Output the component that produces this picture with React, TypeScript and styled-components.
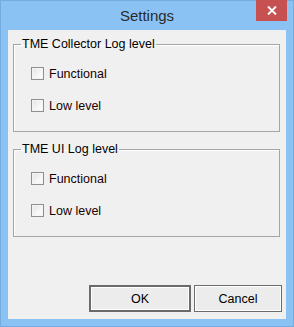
import React from 'react';
import styled, {createGlobalStyle} from "styled-components";

const GlobalStyle = createGlobalStyle`
  html, body {
    margin: 0;
    padding: 0;
    background: #ffffff;
  }
  * {
    box-sizing: border-box;
  }
`

const font = `"Liberation Sans", Arial, sans-serif`

type Group = {
    title: string;
    options: string[];
}

const groups: Group[] = [
    {title: "TME Collector Log level", options: ["Functional", "Low level"]},
    {title: "TME UI Log level", options: ["Functional", "Low level"]},
]

export default function App() {
    return (
        <>
            <GlobalStyle/>
            <Window>
                <TitleBar>
                    <Title>Settings</Title>
                    <CloseButton aria-label="Close">
                        <svg width="10" height="9" viewBox="0 0 10 9">
                            <path d="M1 0.5 L9 8.5 M9 0.5 L1 8.5" stroke="#fff" strokeWidth="2"/>
                        </svg>
                    </CloseButton>
                </TitleBar>
                <Client>
                    {groups.map(group => (
                        <GroupBox key={group.title}>
                            <Legend>{group.title}</Legend>
                            {group.options.map(option => (
                                <Option key={option}>
                                    <CheckBox/>
                                    <span>{option}</span>
                                </Option>
                            ))}
                        </GroupBox>
                    ))}
                    <Buttons>
                        <DialogButton $primary $width={102}>OK</DialogButton>
                        <DialogButton $width={88}>Cancel</DialogButton>
                    </Buttons>
                </Client>
            </Window>
        </>
    );
}

const Window = styled.div`
  width: 294px;
  height: 327px;
  background: #89c2f3;
  border: 1px solid #74ace2;
  display: flex;
  flex-direction: column;
  font-family: ${font};
`

const TitleBar = styled.div`
  height: 30px;
  display: grid;
  grid-template-columns: 1fr auto 1fr;
  margin-top: -1px;
`

const Title = styled.div`
  grid-column: 2;
  font-size: 15px;
  color: #2b2b2b;
  padding-top: 7px;
`

const CloseButton = styled.div`
  grid-column: 3;
  justify-self: end;
  align-self: start;
  width: 31px;
  height: 21px;
  margin-right: 6px;
  background: #c75050;
  display: flex;
  align-items: center;
  justify-content: center;
`

const Client = styled.div`
  flex: 1;
  margin: 0 7px 7px 7px;
  background: #f0f0f0;
  padding: 7px 6px 7px 5px;
  display: flex;
  flex-direction: column;
`

const GroupBox = styled.fieldset`
  margin: 0 0 10px 0;
  padding: 0;
  height: 95px;
  border: 1px solid #a5a5a5;
  box-shadow: inset 1px 1px 0 #ffffff;
  display: flex;
  flex-direction: column;
  gap: 19px;
`

const Legend = styled.legend`
  margin-left: 7px;
  padding: 0 1px;
  font-size: 12.5px;
  line-height: 14px;
  color: #000;
  margin-bottom: 16px;
`

const Option = styled.label`
  display: flex;
  align-items: center;
  gap: 5px;
  height: 13px;
  margin-left: 17px;
  font-size: 12.5px;
  color: #1a0000;
`

const CheckBox = styled.span`
  width: 13px;
  height: 13px;
  border: 1px solid #8f8f8f;
  background: linear-gradient(135deg, #e4e4e4 0%, #f6f6f6 60%, #ffffff 100%);
  box-shadow: inset 0 0 0 1px #f4f4f4;
  flex-shrink: 0;
`

const Buttons = styled.div`
  margin-top: auto;
  display: flex;
  justify-content: flex-end;
  gap: 3px;
  margin-right: -2px;
`

const DialogButton = styled.div<{ $primary?: boolean; $width: number }>`
  width: ${p => p.$width}px;
  height: 27px;
  border: ${p => p.$primary ? "2px" : "1px"} solid #6b6b6b;
  box-shadow: inset 0 0 0 1px #ffffff;
  background: #ececec;
  font-size: 12.5px;
  color: #000;
  display: flex;
  align-items: center;
  justify-content: center;
`
